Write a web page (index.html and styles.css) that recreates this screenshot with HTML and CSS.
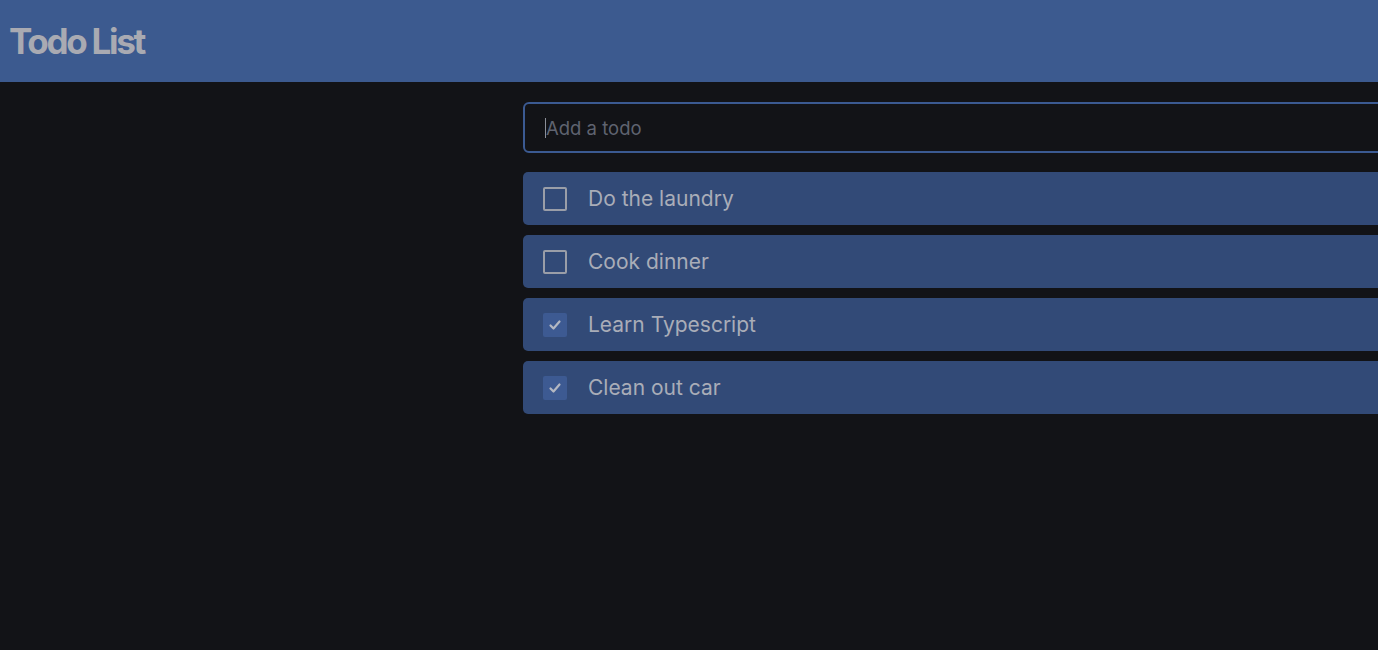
FILE: index.html
```html
<!DOCTYPE html>
<html>
<head>
<meta charset="utf-8">
<link rel="stylesheet" href="styles.css">
</head>
<body>
<header class="topbar"><h1 class="title">Todo List</h1></header>
<main class="main">
  <div class="todo-panel">
    <div class="input-box"><span class="caret"></span><span class="placeholder">Add a todo</span></div>
    <ul class="list">
      <li class="item"><span class="box"></span><span class="label">Do the laundry</span></li>
      <li class="item"><span class="box"></span><span class="label">Cook dinner</span></li>
      <li class="item"><span class="box checked"><svg viewBox="0 0 24 24" width="24" height="24"><path d="M7.5 12.5l3 3 6-7" fill="none" stroke="#b4b8c2" stroke-width="2.2" stroke-linecap="round" stroke-linejoin="round"/></svg></span><span class="label">Learn Typescript</span></li>
      <li class="item"><span class="box checked"><svg viewBox="0 0 24 24" width="24" height="24"><path d="M7.5 12.5l3 3 6-7" fill="none" stroke="#b4b8c2" stroke-width="2.2" stroke-linecap="round" stroke-linejoin="round"/></svg></span><span class="label">Clean out car</span></li>
    </ul>
  </div>
</main>
</body>
</html>
```
FILE: styles.css
```css
html, body { margin: 0; padding: 0; }
body {
  background: #121317;
  font-family: Inter, "Noto Sans", sans-serif;
  width: 1378px;
  height: 650px;
  overflow: hidden;
}
.topbar {
  background: #3c5a8f;
  height: 82px;
  display: flex;
  align-items: center;
  padding-left: 9px;
}
.title {
  margin: 0;
  font-size: 35px;
  font-weight: 700;
  letter-spacing: -0.065em;
  color: #a9aab2;
  line-height: 1;
}
.main {
  padding: 20px 0 0 523px;
  overflow: hidden;
}
.todo-panel {
  width: 960px;
  display: flex;
  flex-direction: column;
  gap: 19px;
}
.input-box {
  height: 51px;
  box-sizing: border-box;
  border: 2px solid #3b5a92;
  border-radius: 6px;
  display: flex;
  align-items: center;
  padding-left: 20px;
}
.caret {
  width: 1px;
  height: 20px;
  background: #8b8f99;
}
.placeholder {
  font-size: 18.5px;
  color: #5f6370;
}
.list {
  list-style: none;
  margin: 0;
  padding: 0;
  display: flex;
  flex-direction: column;
  gap: 10px;
}
.item {
  height: 53px;
  background: #324a77;
  border-radius: 5px;
  display: flex;
  align-items: center;
  padding-left: 20px;
}
.box {
  width: 24px;
  height: 24px;
  box-sizing: border-box;
  border: 2px solid #9a9ea8;
  border-radius: 2px;
  margin-right: 21px;
  display: flex;
}
.box.checked {
  border: none;
  background: #3d5a92;
}
.label {
  font-size: 21px;
  color: #a9adb8;
}
```
